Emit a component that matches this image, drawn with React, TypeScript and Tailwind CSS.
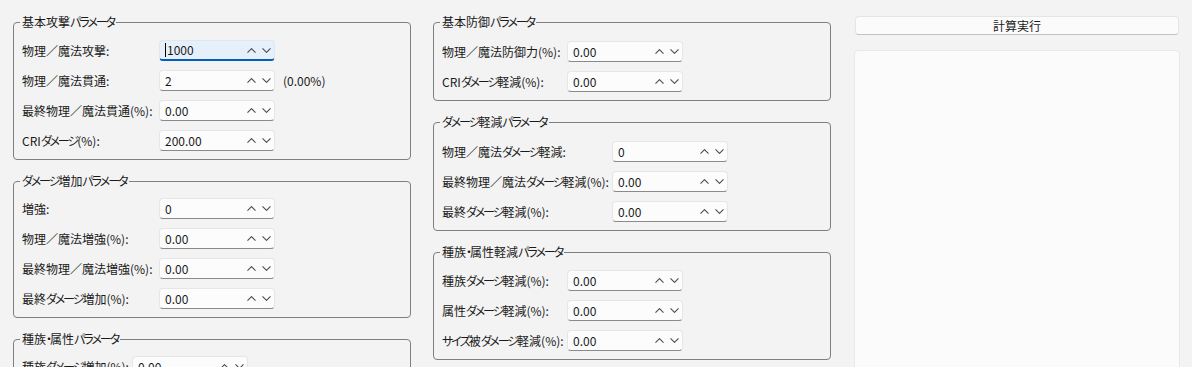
import React from "react";

type Row = { label: string; value: string; focused?: boolean; extra?: string };

function Jp({ text }: { text: string }) {
  const parts = text.split(/([\u30A0-\u30FF]+)/).filter((p) => p.length > 0);
  return (
    <>
      {parts.map((p, i) =>
        /^[\u30A0-\u30FF]+$/.test(p) ? (
          <span key={i} className="tracking-[-2px]">
            {p}
          </span>
        ) : (
          <span key={i}>{p}</span>
        )
      )}
    </>
  );
}

const Chev = ({ up }: { up: boolean }) => (
  <svg width="9" height="5" viewBox="0 0 9 5" className="block">
    <polyline
      points={up ? "0.5,4.6 4.5,0.6 8.5,4.6" : "0.5,0.4 4.5,4.4 8.5,0.4"}
      fill="none"
      stroke="#4a4a4a"
      strokeWidth="1.05"
    />
  </svg>
);

function NumBox({ value, focused }: { value: string; focused?: boolean }) {
  return (
    <div
      className={
        focused
          ? "flex h-[21px] w-[116px] shrink-0 items-center rounded-[4px] border border-[#dfe8f1] border-b-2 border-b-[#005fb8] bg-[#e5f0fb]"
          : "flex h-[21px] w-[116px] shrink-0 items-center rounded-[4px] border border-[#e6e6e6] border-b-[#8a8a8a] bg-[#fcfcfc]"
      }
    >
      <div className="flex flex-1 items-center pl-[5px] text-[12px] leading-none text-[#1a1a1a]">
        {focused && <span className="mr-[1px] inline-block h-[14px] w-[1px] bg-black" />}
        {value}
      </div>
      <span className="flex w-[15px] justify-center">
        <Chev up />
      </span>
      <span className="flex w-[15px] justify-center">
        <Chev up={false} />
      </span>
    </div>
  );
}

function Group({
  title,
  labelW,
  rows,
  pt,
}: {
  title: string;
  labelW: string;
  rows: Row[];
  pt: string;
}) {
  return (
    <fieldset className={`w-[398px] rounded-[4px] border border-[#7f7f7f] pb-[8px] pl-[6px] pr-2 ${pt}`}>
      <legend className="px-[2px] text-[12px] leading-[16px] text-[#1a1a1a]">
        <Jp text={title} />
      </legend>
      <div className="flex flex-col gap-[9px] pl-[2px]">
        {rows.map((r) => (
          <div key={r.label} className="flex items-center">
            <div className={`${labelW} shrink-0 whitespace-nowrap text-[12px] leading-[16px] text-[#1a1a1a]`}>
              <Jp text={r.label} />
            </div>
            <NumBox value={r.value} focused={r.focused} />
            {r.extra && (
              <span className="ml-[8px] whitespace-nowrap text-[12px] leading-[16px] text-[#1a1a1a]">{r.extra}</span>
            )}
          </div>
        ))}
      </div>
    </fieldset>
  );
}

export default function App() {
  return (
    <div className="h-[367px] overflow-hidden bg-[#f3f3f3] font-['Noto_Sans_CJK_JP',sans-serif] [font-feature-settings:'palt']">
      <div className="flex items-start pl-[13px] pt-[14px]">
        <div className="flex w-[398px] shrink-0 flex-col gap-[13px]">
          <Group
            title="基本攻撃パラメータ"
            labelW="w-[137px]"
            pt="pt-[10px]"
            rows={[
              { label: "物理／魔法攻撃:", value: "1000", focused: true },
              { label: "物理／魔法貫通:", value: "2", extra: "(0.00%)" },
              { label: "最終物理／魔法貫通(%):", value: "0.00" },
              { label: "CRIダメージ(%):", value: "200.00" },
            ]}
          />
          <Group
            title="ダメージ増加パラメータ"
            labelW="w-[137px]"
            pt="pt-[9px]"
            rows={[
              { label: "増強:", value: "0" },
              { label: "物理／魔法増強(%):", value: "0.00" },
              { label: "最終物理／魔法増強(%):", value: "0.00" },
              { label: "最終ダメージ増加(%):", value: "0.00" },
            ]}
          />
          <Group
            title="種族・属性パラメータ"
            labelW="w-[110px]"
            pt="pt-[9px]"
            rows={[
              { label: "種族ダメージ増加(%):", value: "0.00" },
              { label: "属性ダメージ増加(%):", value: "0.00" },
              { label: "サイズ増加(%):", value: "0.00" },
            ]}
          />
        </div>
        <div className="ml-[22px] flex w-[398px] shrink-0 flex-col gap-[13px]">
          <Group
            title="基本防御パラメータ"
            labelW="w-[125px]"
            pt="pt-[11px]"
            rows={[
              { label: "物理／魔法防御力(%):", value: "0.00" },
              { label: "CRIダメージ軽減(%):", value: "0.00" },
            ]}
          />
          <Group
            title="ダメージ軽減パラメータ"
            labelW="w-[170px]"
            pt="pt-[11px]"
            rows={[
              { label: "物理／魔法ダメージ軽減:", value: "0" },
              { label: "最終物理／魔法ダメージ軽減(%):", value: "0.00" },
              { label: "最終ダメージ軽減(%):", value: "0.00" },
            ]}
          />
          <Group
            title="種族・属性軽減パラメータ"
            labelW="w-[125px]"
            pt="pt-[10px]"
            rows={[
              { label: "種族ダメージ軽減(%):", value: "0.00" },
              { label: "属性ダメージ軽減(%):", value: "0.00" },
              { label: "サイズ被ダメージ軽減(%):", value: "0.00" },
            ]}
          />
        </div>
        <div className="ml-[23px] mt-[2px] flex w-[326px] shrink-0 flex-col gap-[15px]">
          <button className="mx-[1px] flex h-[19px] items-center justify-center rounded-[4px] border border-[#e5e5e5] border-b-[#c2c2c2] bg-[#fbfbfb] text-[12px] leading-none text-[#1a1a1a]">
            計算実行
          </button>
          <div className="h-[400px] rounded-[4px] border border-[#e8e8e8] bg-[#fbfbfb]" />
        </div>
      </div>
    </div>
  );
}
